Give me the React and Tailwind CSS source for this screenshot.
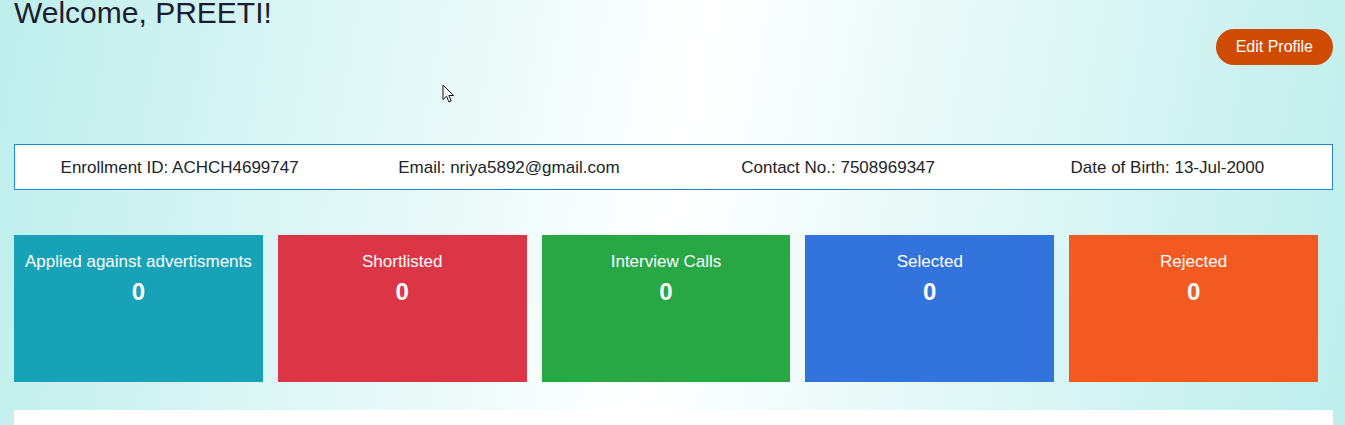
import React from "react";

const cards = [
  { title: "Applied against advertisments", value: 0, cls: "bg-[#17a2b8]" },
  { title: "Shortlisted", value: 0, cls: "bg-[#dc3545]" },
  { title: "Interview Calls", value: 0, cls: "bg-[#28a745]" },
  { title: "Selected", value: 0, cls: "bg-[#3273dc]" },
  { title: "Rejected", value: 0, cls: "bg-[#f25a22]" },
];

export default function App() {
  return (
    <div
      className="relative h-[425px] overflow-hidden bg-[linear-gradient(100deg,#bdeeec_0%,#ffffff_50%,#bdeeec_100%)] pl-[14px] pr-[12px] text-[#1f2230]"
      style={{ fontFamily: '"Liberation Sans", Arial, sans-serif' }}
    >
      <div className="flex items-start justify-between">
        <h1 className="-mt-[5px] text-[30px] leading-[36px] font-normal text-[#1c1d2e]">
          Welcome, PREETI!
        </h1>
        <button className="mt-[29px] h-[36px] rounded-full bg-[#cf4a02] px-[20px] text-[16px] leading-[36px] text-white">
          Edit Profile
        </button>
      </div>

      <div className="mt-[79px] grid h-[46px] grid-cols-4 items-center border border-[#1e88d6] bg-white text-center text-[17px] leading-[25px] text-[#212529]">
        <div>Enrollment ID: ACHCH4699747</div>
        <div>Email: nriya5892@gmail.com</div>
        <div>Contact No.: 7508969347</div>
        <div>Date of Birth: 13-Jul-2000</div>
      </div>

      <div className="mt-[45px] grid grid-cols-5">
        {cards.map((c) => (
          <div key={c.title} className="pr-[15px]">
            <div className={`h-[147px] pt-[14px] text-center text-white ${c.cls}`}>
              <div className="text-[17px] leading-[25.5px]">{c.title}</div>
              <div className="mt-[2px] text-[24px] leading-[29px] font-bold">{c.value}</div>
            </div>
          </div>
        ))}
      </div>

      <div className="mt-[28px] h-[200px] bg-white"></div>

      <svg
        className="absolute left-[442px] top-[84px]"
        width="13"
        height="20"
        viewBox="0 0 13 20"
      >
        <path
          d="M1 1 L1 15.5 L4.5 12.2 L7 18 L9.2 17 L6.8 11.5 L11.5 11.5 Z"
          fill="#ffffff"
          stroke="#111111"
          strokeWidth="1"
          strokeLinejoin="miter"
        />
      </svg>
    </div>
  );
}
